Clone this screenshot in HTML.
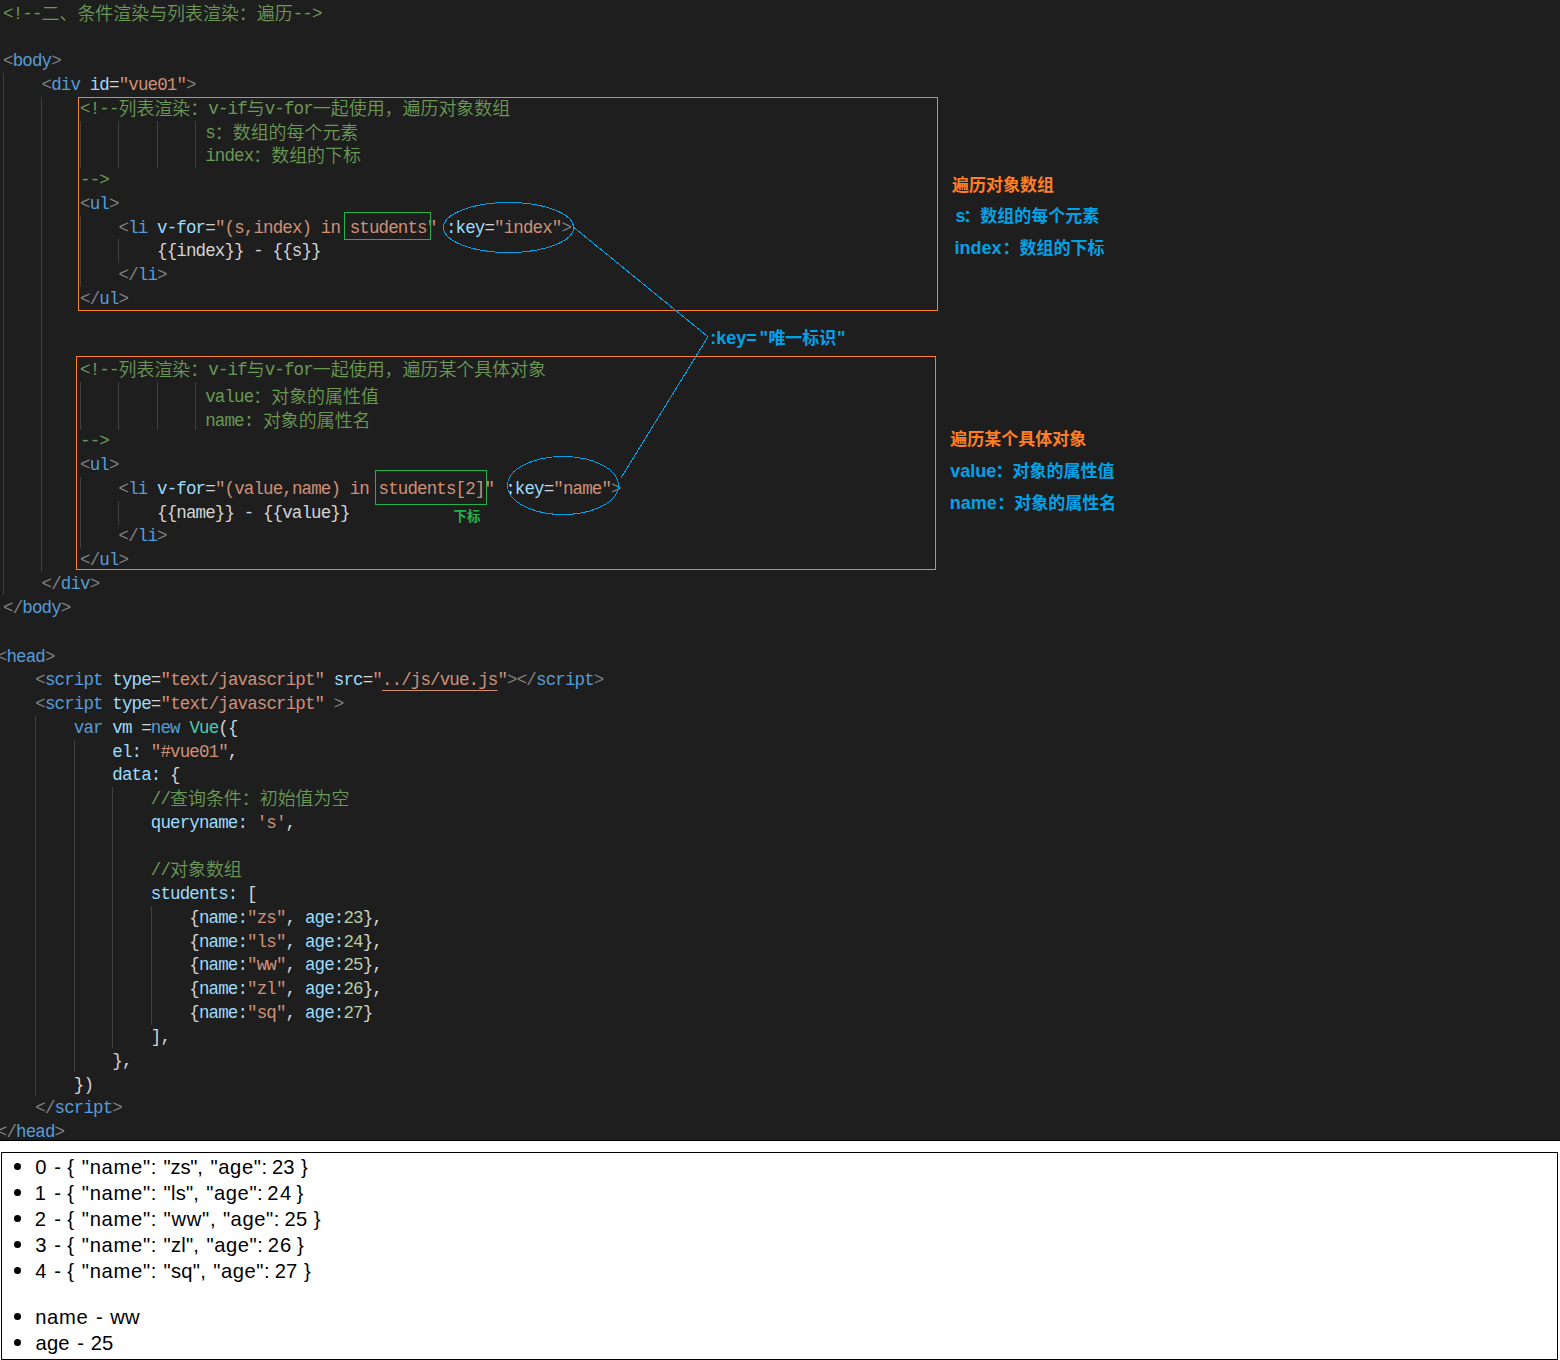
<!DOCTYPE html>
<html lang="zh-CN">
<head>
<meta charset="utf-8">
<title>v-for</title>
<style>
html,body{margin:0;padding:0;background:#fff}
body{width:1560px;height:1360px;position:relative;overflow:hidden}
.ed{position:absolute;left:0;top:0;width:1560px;height:1140px;background:#1e1e1e;overflow:hidden;border-bottom:1px solid #000}
.l{position:absolute;white-space:pre;font-family:"Liberation Mono", "DejaVu Sans Mono", "Noto Sans CJK SC", monospace;font-size:17.5px;letter-spacing:-0.8767px;line-height:24px;height:24px;color:#d4d4d4}
.l b{font-weight:normal}
.l i{font-style:normal;font-family:"Noto Sans CJK SC","WenQuanYi Zen Hei",sans-serif;font-size:17.95px;font-weight:350;letter-spacing:0;line-height:0;position:relative;top:.8px}
.c{color:#6a9955}.g{color:#808080}.t{color:#569cd6}.a{color:#9cdcfe}.s{color:#ce9178}.d{color:#d4d4d4}
.k{color:#569cd6}.n{color:#b5cea8}.v{color:#4ec9b0}
.m{margin-left:1.5px}
.u{text-decoration:underline;text-underline-offset:4.6px;text-decoration-thickness:1px}
.gd{position:absolute;width:1px;background:#404040}
.ob{position:absolute;border:1px solid #ff7f27;box-sizing:border-box}
.gb{position:absolute;border:1px solid #22b14c;box-sizing:border-box}
.ov{position:absolute;left:0;top:0}
.an{position:absolute;white-space:pre;font-family:"Liberation Sans","Noto Sans CJK SC",sans-serif;font-weight:bold;font-size:17px;line-height:24px}
.an .la{font-size:18px;line-height:0}
.bl{color:#00a2e8}.or{color:#ff7f27}.gr{color:#22b14c;font-size:13.4px;line-height:16px}
.wb{position:absolute;left:1px;top:1152px;width:1557px;height:208px;border:1px solid #000;box-sizing:border-box;background:#fff}
.dot{position:absolute;left:13.9px;width:7.2px;height:7.2px;border-radius:50%;background:#000}
.li{position:absolute;left:0;width:400px;height:26px;white-space:pre;font-family:"Liberation Sans","Noto Sans CJK SC",sans-serif;font-size:20.2px;line-height:26px;color:#000}
.li span{position:absolute;top:0}
</style>
</head>
<body>
<div class="ed">
<div class="gd" style="left:3.00px;top:73.0px;height:522.0px"></div><div class="gd" style="left:41.00px;top:97.0px;height:475.0px"></div><div class="gd" style="left:80.00px;top:121.0px;height:47.0px"></div><div class="gd" style="left:80.00px;top:382.0px;height:48.0px"></div><div class="gd" style="left:118.00px;top:121.0px;height:47.0px"></div><div class="gd" style="left:118.00px;top:382.0px;height:48.0px"></div><div class="gd" style="left:157.00px;top:121.0px;height:47.0px"></div><div class="gd" style="left:157.00px;top:382.0px;height:48.0px"></div><div class="gd" style="left:195.00px;top:121.0px;height:47.0px"></div><div class="gd" style="left:195.00px;top:382.0px;height:48.0px"></div><div class="gd" style="left:80.00px;top:216.0px;height:71.0px"></div><div class="gd" style="left:118.00px;top:239.0px;height:24.0px"></div><div class="gd" style="left:80.00px;top:477.0px;height:71.0px"></div><div class="gd" style="left:118.00px;top:501.0px;height:24.0px"></div><div class="gd" style="left:35.00px;top:716.0px;height:380.0px"></div><div class="gd" style="left:74.00px;top:740.0px;height:332.0px"></div><div class="gd" style="left:112.00px;top:787.0px;height:261.0px"></div><div class="gd" style="left:151.00px;top:906.0px;height:119.0px"></div>
<div class="l" style="left:3.05px;top:2.00px"><b class="c">&lt;!--<i>二、条件渲染与列表渲染：遍历</i>--&gt;</b></div>
<div class="l" style="left:3.05px;top:49.00px"><b class="g">&lt;</b><b class="t">body</b><b class="g">&gt;</b></div>
<div class="l" style="left:41.55px;top:73.00px"><b class="g">&lt;</b><b class="t">div</b><b class="d"> </b><b class="a">id</b><b class="d">=</b><b class="s">"vue01"</b><b class="g">&gt;</b></div>
<div class="l" style="left:80.05px;top:97.00px"><b class="c">&lt;!--<i>列表渲染：</i>v-if<i>与</i>v-for<i>一起使用，遍历对象数组</i></b></div>
<div class="l" style="left:205.18px;top:121.00px"><b class="c">s<i>：数组的每个元素</i></b></div>
<div class="l" style="left:205.18px;top:144.00px"><b class="c">index<i>：数组的下标</i></b></div>
<div class="l" style="left:80.05px;top:168.00px"><b class="c">--&gt;</b></div>
<div class="l" style="left:80.05px;top:192.00px"><b class="g">&lt;</b><b class="t">ul</b><b class="g">&gt;</b></div>
<div class="l" style="left:118.55px;top:216.00px"><b class="g">&lt;</b><b class="t">li</b><b class="d"> </b><b class="a">v-for</b><b class="d">=</b><b class="s">"(s,index) in students"</b><b class="d"> </b><b class="a">:key</b><b class="d">=</b><b class="s">"index"</b><b class="g">&gt;</b></div>
<div class="l" style="left:157.05px;top:239.00px"><b class="d">{{index}} - {{s}}</b></div>
<div class="l" style="left:118.55px;top:263.00px"><b class="g">&lt;/</b><b class="t">li</b><b class="g">&gt;</b></div>
<div class="l" style="left:80.05px;top:287.00px"><b class="g">&lt;/</b><b class="t">ul</b><b class="g">&gt;</b></div>
<div class="l" style="left:80.05px;top:358.00px"><b class="c">&lt;!--<i>列表渲染：</i>v-if<i>与</i>v-for<i>一起使用，遍历某个具体对象</i></b></div>
<div class="l" style="left:205.18px;top:385.00px"><b class="c">value<i>：对象的属性值</i></b></div>
<div class="l" style="left:205.18px;top:409.00px"><b class="c">name: <i>对象的属性名</i></b></div>
<div class="l" style="left:80.05px;top:429.00px"><b class="c">--&gt;</b></div>
<div class="l" style="left:80.05px;top:453.00px"><b class="g">&lt;</b><b class="t">ul</b><b class="g">&gt;</b></div>
<div class="l" style="left:118.55px;top:477.00px"><b class="g">&lt;</b><b class="t">li</b><b class="d"> </b><b class="a">v-for</b><b class="d">=</b><b class="s">"(value,name) in students[2]"</b><b class="d"> </b><b class="a m">:key</b><b class="d">=</b><b class="s">"name"</b><b class="g">&gt;</b></div>
<div class="l" style="left:157.05px;top:501.00px"><b class="d">{{name}} - {{value}}</b></div>
<div class="l" style="left:118.55px;top:524.00px"><b class="g">&lt;/</b><b class="t">li</b><b class="g">&gt;</b></div>
<div class="l" style="left:80.05px;top:548.00px"><b class="g">&lt;/</b><b class="t">ul</b><b class="g">&gt;</b></div>
<div class="l" style="left:41.55px;top:572.00px"><b class="g">&lt;/</b><b class="t">div</b><b class="g">&gt;</b></div>
<div class="l" style="left:3.05px;top:596.00px"><b class="g">&lt;/</b><b class="t">body</b><b class="g">&gt;</b></div>
<div class="l" style="left:-3.20px;top:645.00px"><b class="g">&lt;</b><b class="t">head</b><b class="g">&gt;</b></div>
<div class="l" style="left:35.30px;top:668.00px"><b class="g">&lt;</b><b class="t">script</b><b class="d"> </b><b class="a">type</b><b class="d">=</b><b class="s">"text/javascript"</b><b class="d"> </b><b class="a">src</b><b class="d">=</b><b class="s">"</b><b class="s u">../js/vue.js</b><b class="s">"</b><b class="g">&gt;&lt;/</b><b class="t">script</b><b class="g">&gt;</b></div>
<div class="l" style="left:35.30px;top:692.00px"><b class="g">&lt;</b><b class="t">script</b><b class="d"> </b><b class="a">type</b><b class="d">=</b><b class="s">"text/javascript"</b><b class="d"> </b><b class="g">&gt;</b></div>
<div class="l" style="left:73.80px;top:716.00px"><b class="k">var</b><b class="d"> </b><b class="a">vm</b><b class="d"> =</b><b class="k">new</b><b class="d"> </b><b class="v">Vue</b><b class="d">({</b></div>
<div class="l" style="left:112.30px;top:740.00px"><b class="a">el</b><b class="a">:</b><b class="d"> </b><b class="s">"#vue01"</b><b class="d">,</b></div>
<div class="l" style="left:112.30px;top:763.00px"><b class="a">data</b><b class="a">:</b><b class="d"> {</b></div>
<div class="l" style="left:150.80px;top:787.00px"><b class="c">//<i>查询条件：初始值为空</i></b></div>
<div class="l" style="left:150.80px;top:811.00px"><b class="a">queryname</b><b class="a">:</b><b class="d"> </b><b class="s">'s'</b><b class="d">,</b></div>
<div class="l" style="left:150.80px;top:858.00px"><b class="c">//<i>对象数组</i></b></div>
<div class="l" style="left:150.80px;top:882.00px"><b class="a">students</b><b class="a">:</b><b class="d"> [</b></div>
<div class="l" style="left:189.30px;top:906.00px"><b class="d">{</b><b class="a">name</b><b class="a">:</b><b class="s">"zs"</b><b class="d">, </b><b class="a">age</b><b class="a">:</b><b class="n">23</b><b class="d">},</b></div>
<div class="l" style="left:189.30px;top:930.00px"><b class="d">{</b><b class="a">name</b><b class="a">:</b><b class="s">"ls"</b><b class="d">, </b><b class="a">age</b><b class="a">:</b><b class="n">24</b><b class="d">},</b></div>
<div class="l" style="left:189.30px;top:953.00px"><b class="d">{</b><b class="a">name</b><b class="a">:</b><b class="s">"ww"</b><b class="d">, </b><b class="a">age</b><b class="a">:</b><b class="n">25</b><b class="d">},</b></div>
<div class="l" style="left:189.30px;top:977.00px"><b class="d">{</b><b class="a">name</b><b class="a">:</b><b class="s">"zl"</b><b class="d">, </b><b class="a">age</b><b class="a">:</b><b class="n">26</b><b class="d">},</b></div>
<div class="l" style="left:189.30px;top:1001.00px"><b class="d">{</b><b class="a">name</b><b class="a">:</b><b class="s">"sq"</b><b class="d">, </b><b class="a">age</b><b class="a">:</b><b class="n">27</b><b class="d">}</b></div>
<div class="l" style="left:150.80px;top:1025.00px"><b class="d">],</b></div>
<div class="l" style="left:112.30px;top:1049.00px"><b class="d">},</b></div>
<div class="l" style="left:73.80px;top:1073.00px"><b class="d">})</b></div>
<div class="l" style="left:35.30px;top:1096.00px"><b class="g">&lt;/</b><b class="t">script</b><b class="g">&gt;</b></div>
<div class="l" style="left:-3.20px;top:1120.00px"><b class="g">&lt;/</b><b class="t">head</b><b class="g">&gt;</b></div>

<div class="ob" style="left:78px;top:97px;width:860px;height:214px"></div>
<div class="ob" style="left:76px;top:356px;width:860px;height:214px"></div>
<div class="gb" style="left:344px;top:212px;width:87px;height:28px"></div>
<div class="gb" style="left:375px;top:470px;width:112px;height:35px"></div>
<svg class="ov" width="1560" height="1140" viewBox="0 0 1560 1140">
<g fill="none" stroke="#00a2e8" stroke-width="1" shape-rendering="crispEdges">
<ellipse cx="508.5" cy="227.5" rx="65" ry="25"/>
<ellipse cx="563" cy="485.5" rx="55.5" ry="29"/>
<line x1="573.6" y1="227.2" x2="707.8" y2="336.6"/>
<line x1="707.8" y1="337" x2="621.3" y2="477.4"/>
</g>
</svg>
<div class="an bl" style="left:709.8px;top:326.6px"><span class="la" style="margin-left:.5px">:key=</span><span class="la" style="margin-left:2.6px">"</span><span style="margin-left:.4px">唯一标识</span><span class="la" style="margin-left:.6px">"</span></div>
<div class="an or" style="left:952.1px;top:173.65px">遍历对象数组</div>
<div class="an bl" style="left:955.6px;top:204.7px"><span class="la">s</span></div>
<div class="an bl" style="left:963.2px;top:204.7px">：数组的每个元素</div>
<div class="an bl" style="left:954.6px;top:236.6px"><span class="la">index</span></div>
<div class="an bl" style="left:1002.4px;top:236.6px">：数组的下标</div>
<div class="an or" style="left:950.2px;top:427.8px">遍历某个具体对象</div>
<div class="an bl" style="left:950.2px;top:459.6px"><span class="la">value</span></div>
<div class="an bl" style="left:995.4px;top:459.6px">：对象的属性值</div>
<div class="an bl" style="left:949.8px;top:491.8px"><span class="la">name</span></div>
<div class="an bl" style="left:997.3px;top:491.8px">：对象的属性名</div>
<div class="an gr" style="left:453.6px;top:509px">下标</div>

</div>
<div class="wb"></div>
<div class="dot" style="top:1162.7px"></div><div class="li" style="top:1153.7px"><span style="left:35.35px">0</span><span style="left:54.20px">-</span><span style="left:67.30px">{</span><span style="left:81.80px;letter-spacing:0.69px">"name":</span><span style="left:163.60px;letter-spacing:-0.20px">"zs",</span><span style="left:210.60px;letter-spacing:0.56px">"age":</span><span style="left:271.90px;letter-spacing:0.07px">23</span><span style="left:301.10px">}</span></div>
<div class="dot" style="top:1188.7px"></div><div class="li" style="top:1179.7px"><span style="left:34.85px">1</span><span style="left:54.20px">-</span><span style="left:67.30px">{</span><span style="left:81.80px;letter-spacing:0.69px">"name":</span><span style="left:163.60px;letter-spacing:0.20px">"ls",</span><span style="left:206.30px;letter-spacing:0.56px">"age":</span><span style="left:267.30px;letter-spacing:1.47px">24</span><span style="left:296.50px">}</span></div>
<div class="dot" style="top:1214.7px"></div><div class="li" style="top:1205.7px"><span style="left:34.85px">2</span><span style="left:54.20px">-</span><span style="left:67.30px">{</span><span style="left:81.80px;letter-spacing:0.69px">"name":</span><span style="left:163.60px;letter-spacing:0.73px">"ww",</span><span style="left:222.90px;letter-spacing:0.56px">"age":</span><span style="left:284.60px;letter-spacing:0.07px">25</span><span style="left:313.80px">}</span></div>
<div class="dot" style="top:1240.7px"></div><div class="li" style="top:1231.7px"><span style="left:35.35px">3</span><span style="left:54.20px">-</span><span style="left:67.30px">{</span><span style="left:81.80px;letter-spacing:0.69px">"name":</span><span style="left:163.60px;letter-spacing:0.20px">"zl",</span><span style="left:206.50px;letter-spacing:0.56px">"age":</span><span style="left:267.80px;letter-spacing:0.97px">26</span><span style="left:297.10px">}</span></div>
<div class="dot" style="top:1266.7px"></div><div class="li" style="top:1257.7px"><span style="left:35.35px">4</span><span style="left:54.20px">-</span><span style="left:67.30px">{</span><span style="left:81.80px;letter-spacing:0.69px">"name":</span><span style="left:163.60px;letter-spacing:0.24px">"sq",</span><span style="left:213.20px;letter-spacing:0.56px">"age":</span><span style="left:274.80px;letter-spacing:0.07px">27</span><span style="left:304.00px">}</span></div>
<div class="dot" style="top:1312.8px"></div><div class="li" style="top:1303.8px"><span style="left:35.20px;letter-spacing:0.64px">name</span><span style="left:96.05px">-</span><span style="left:110.30px;letter-spacing:0.22px">ww</span></div>
<div class="dot" style="top:1338.8px"></div><div class="li" style="top:1329.8px"><span style="left:35.60px;letter-spacing:0.12px">age</span><span style="left:77.25px">-</span><span style="left:90.80px;letter-spacing:0.07px">25</span></div>

</body>
</html>
